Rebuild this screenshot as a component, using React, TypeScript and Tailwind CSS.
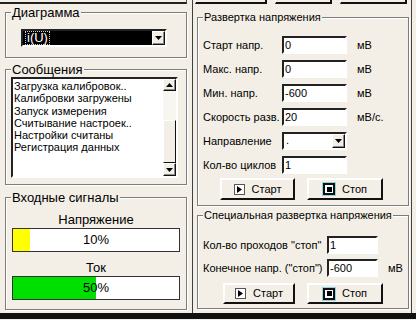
import React from "react";

const BG = "bg-[#f3efe6]";

function Group({
  title,
  big,
  className,
  bodyClass,
  children,
}: {
  title: string;
  big?: boolean;
  className?: string;
  bodyClass?: string;
  children?: React.ReactNode;
}) {
  return (
    <fieldset
      className={`border border-[#7c7c7c] shadow-[inset_1px_1px_0_#ffffff,1px_1px_0_#ffffff] ${className ?? ""}`}
    >
      <legend
        className={`ml-[5px] px-px bg-[#f3efe6] leading-none ${big ? "text-[13px]" : "text-[11px]"}`}
      >
        {title}
      </legend>
      <div className={bodyClass}>{children}</div>
    </fieldset>
  );
}

function ArrowBox({ dir, className }: { dir: "up" | "down"; className?: string }) {
  return (
    <div
      className={`flex items-center justify-center border border-t-white border-l-white border-b-[#111] border-r-[#111] shadow-[inset_-1px_-1px_0_#8a8a8a] bg-[#f3efe6] ${className ?? ""}`}
    >
      <svg width="7" height="4" viewBox="0 0 7 4">
        {dir === "down" ? <polygon points="0,0 7,0 3.5,4" fill="#000" /> : <polygon points="0,4 7,4 3.5,0" fill="#000" />}
      </svg>
    </div>
  );
}

function PlayIcon() {
  return (
    <span className="flex h-[11px] w-[11px] items-center justify-center border border-[#555] bg-white">
      <svg width="5" height="7" viewBox="0 0 5 7">
        <polygon points="0,0 5,3.5 0,7" fill="#000" />
      </svg>
    </span>
  );
}

function StopIcon() {
  return (
    <span className="flex h-[12px] w-[12px] items-center justify-center border-2 border-[#111] bg-white shadow-[0_0_0_1px_#8fd6dc]">
      <span className="h-[5px] w-[5px] bg-black" />
    </span>
  );
}

function WinButton({ kind, className }: { kind: "start" | "stop"; className?: string }) {
  return (
    <div
      className={`flex items-center justify-center gap-[7px] border-2 border-t-white border-l-white border-b-[#111] border-r-[#111] ${BG} ${className ?? ""}`}
    >
      {kind === "start" ? <PlayIcon /> : <StopIcon />}
      <span className="text-[11px] leading-none">{kind === "start" ? "Старт" : "Стоп"}</span>
    </div>
  );
}

function Field({
  label,
  value,
  unit,
  labelW,
  inputW,
  className,
}: {
  label: string;
  value: string;
  unit?: string;
  labelW: string;
  inputW: string;
  className?: string;
}) {
  return (
    <div className={`flex items-center ${className ?? ""}`}>
      <span className={`${labelW} text-[11px] leading-none`}>{label}</span>
      <div
        className={`${inputW} h-[18px] flex items-end pb-[1px] pl-[1px] border-2 border-t-[#222] border-l-[#222] border-b-white border-r-white bg-white text-[11px] leading-none`}
      >
        {value}
      </div>
      {unit && <span className="ml-[10px] text-[11px] leading-none">{unit}</span>}
    </div>
  );
}

const MESSAGES = [
  "Загрузка калибровок..",
  "Калибровки загружены",
  "Запуск измерения",
  "Считывание настроек..",
  "Настройки считаны",
  "Регистрация данных",
];

function Meter({ label, pct, color }: { label: string; pct: number; color: string }) {
  return (
    <div className="flex flex-col">
      <div className="text-center text-[13px] leading-[16px]">{label}</div>
      <div className="relative h-[24px] w-[168px] border border-[#333] bg-white">
        <div className={`absolute left-0 top-0 h-full ${color}`} style={{ width: `${pct}%` }} />
        <div className="relative flex h-full items-center justify-center text-[13px]">{pct}%</div>
      </div>
    </div>
  );
}

export default function App() {
  return (
    <div
      className={`flex h-[320px] w-[416px] flex-col overflow-hidden ${BG} font-['Liberation_Sans',Arial,sans-serif] text-black`}
    >
      <div className="flex h-[313px]">
        {/* left column */}
        <div className="flex w-[190px] flex-col">
          <div className="h-[4px] w-[187px] border-b-2 border-r border-b-[#222] border-r-[#555]" />

          <Group title="Диаграмма" big className="ml-[5px] mt-[2px] h-[52px] w-[182px]" bodyClass="px-[15px]">
            <div className="mt-[10px] flex h-[18px] w-[146px] border-2 border-t-[#222] border-l-[#222] border-b-white border-r-white bg-black">
              <div className="flex flex-1 items-center pl-[2px]">
                <span className="border border-dotted border-[#ccc] px-px text-[13px] leading-[12px] text-white">
                  i(U)
                </span>
              </div>
              <ArrowBox dir="down" className="w-[13px]" />
            </div>
          </Group>

          <Group title="Сообщения" big className="ml-[5px] mt-[5px] h-[122px] w-[182px]" bodyClass="px-[5px]">
            <div className="mt-px flex h-[101px] w-[167px] border-2 border-t-[#222] border-l-[#222] border-b-white border-r-white bg-white">
              <div className="flex-1 pl-[1px] pt-[1px] text-[11px] leading-[12.3px]">
                {MESSAGES.map((m) => (
                  <div key={m} className="whitespace-nowrap">
                    {m}
                  </div>
                ))}
              </div>
              <div className="flex w-[13px] flex-col bg-[#f8f6f1]">
                <ArrowBox dir="up" className="h-[12px]" />
                <div className="h-[29px]" />
                <div className="flex-1 border border-t-white border-l-white border-b-[#111] border-r-[#111] bg-[#f3efe6]" />
                <ArrowBox dir="down" className="h-[13px]" />
              </div>
            </div>
          </Group>

          <Group
            title="Входные сигналы"
            big
            className="ml-[5px] mt-[6px] h-[119px] w-[182px]"
            bodyClass="px-[6px]"
          >
            <div className="mt-[8px] flex flex-col gap-[8px]">
              <Meter label="Напряжение" pct={10} color="bg-[#ffff00]" />
              <Meter label="Ток" pct={50} color="bg-[#00e000]" />
            </div>
          </Group>
        </div>

        {/* right column */}
        <div className="ml-[2px] flex w-[220px] flex-col border-l border-r border-[#404040]">
          <div className="flex h-[4px]">
            <div className="ml-[2px] w-[72px] border-b-2 border-l border-r-2 border-b-[#111] border-l-white border-r-[#111]" />
            <div className="ml-[8px] w-[57px] border-b-2 border-l border-r-2 border-b-[#111] border-l-white border-r-[#111]" />
            <div className="ml-[8px] w-[67px] border-b-2 border-l border-r-2 border-b-[#111] border-l-white border-r-[#111]" />
          </div>

          <Group
            title="Развертка напряжения"
            className="ml-[4px] mt-[8px] h-[194px] w-[212px]"
            bodyClass="pl-[5px]"
          >
            <div className="mt-[13px] flex flex-col gap-[6px]">
              <Field label="Старт напр." value="0" unit="мВ" labelW="w-[79px]" inputW="w-[65px]" />
              <Field label="Макс. напр." value="0" unit="мВ" labelW="w-[79px]" inputW="w-[65px]" />
              <Field label="Мин. напр." value="-600" unit="мВ" labelW="w-[79px]" inputW="w-[65px]" />
              <Field label="Скорость разв." value="20" unit="мВ/с." labelW="w-[79px]" inputW="w-[65px]" />
              <div className="flex items-center">
                <span className="w-[79px] text-[11px] leading-none">Направление</span>
                <div className="flex h-[18px] w-[65px] border-2 border-t-[#222] border-l-[#222] border-b-white border-r-white bg-white">
                  <div className="flex-1 pl-[2px] text-[11px] leading-[12px]">.</div>
                  <ArrowBox dir="down" className="w-[13px]" />
                </div>
              </div>
              <Field label="Кол-во циклов" value="1" labelW="w-[79px]" inputW="w-[65px]" />
            </div>
            <div className="ml-[17px] mt-[4px] flex gap-[12px]">
              <WinButton kind="start" className="h-[22px] w-[75px]" />
              <WinButton kind="stop" className="h-[22px] w-[76px]" />
            </div>
          </Group>

          <Group
            title="Специальная развертка напряжения"
            className="ml-[4px] mt-[4px] h-[99px] w-[212px]"
            bodyClass="pl-[5px]"
          >
            <div className="mt-[15px] flex flex-col gap-[5px]">
              <Field label={'Кол-во проходов "стоп"'} value="1" labelW="w-[124px]" inputW="w-[51px]" />
              <Field label={'Конечное напр. ("стоп")'} value="-600" unit="мВ" labelW="w-[124px]" inputW="w-[51px]" />
            </div>
            <div className="ml-[20px] mt-[6px] flex gap-[12px]">
              <WinButton kind="start" className="h-[21px] w-[72px]" />
              <WinButton kind="stop" className="h-[21px] w-[76px]" />
            </div>
          </Group>
        </div>
      </div>
      <div className="h-[6px] bg-[#111]" />
    </div>
  );
}
